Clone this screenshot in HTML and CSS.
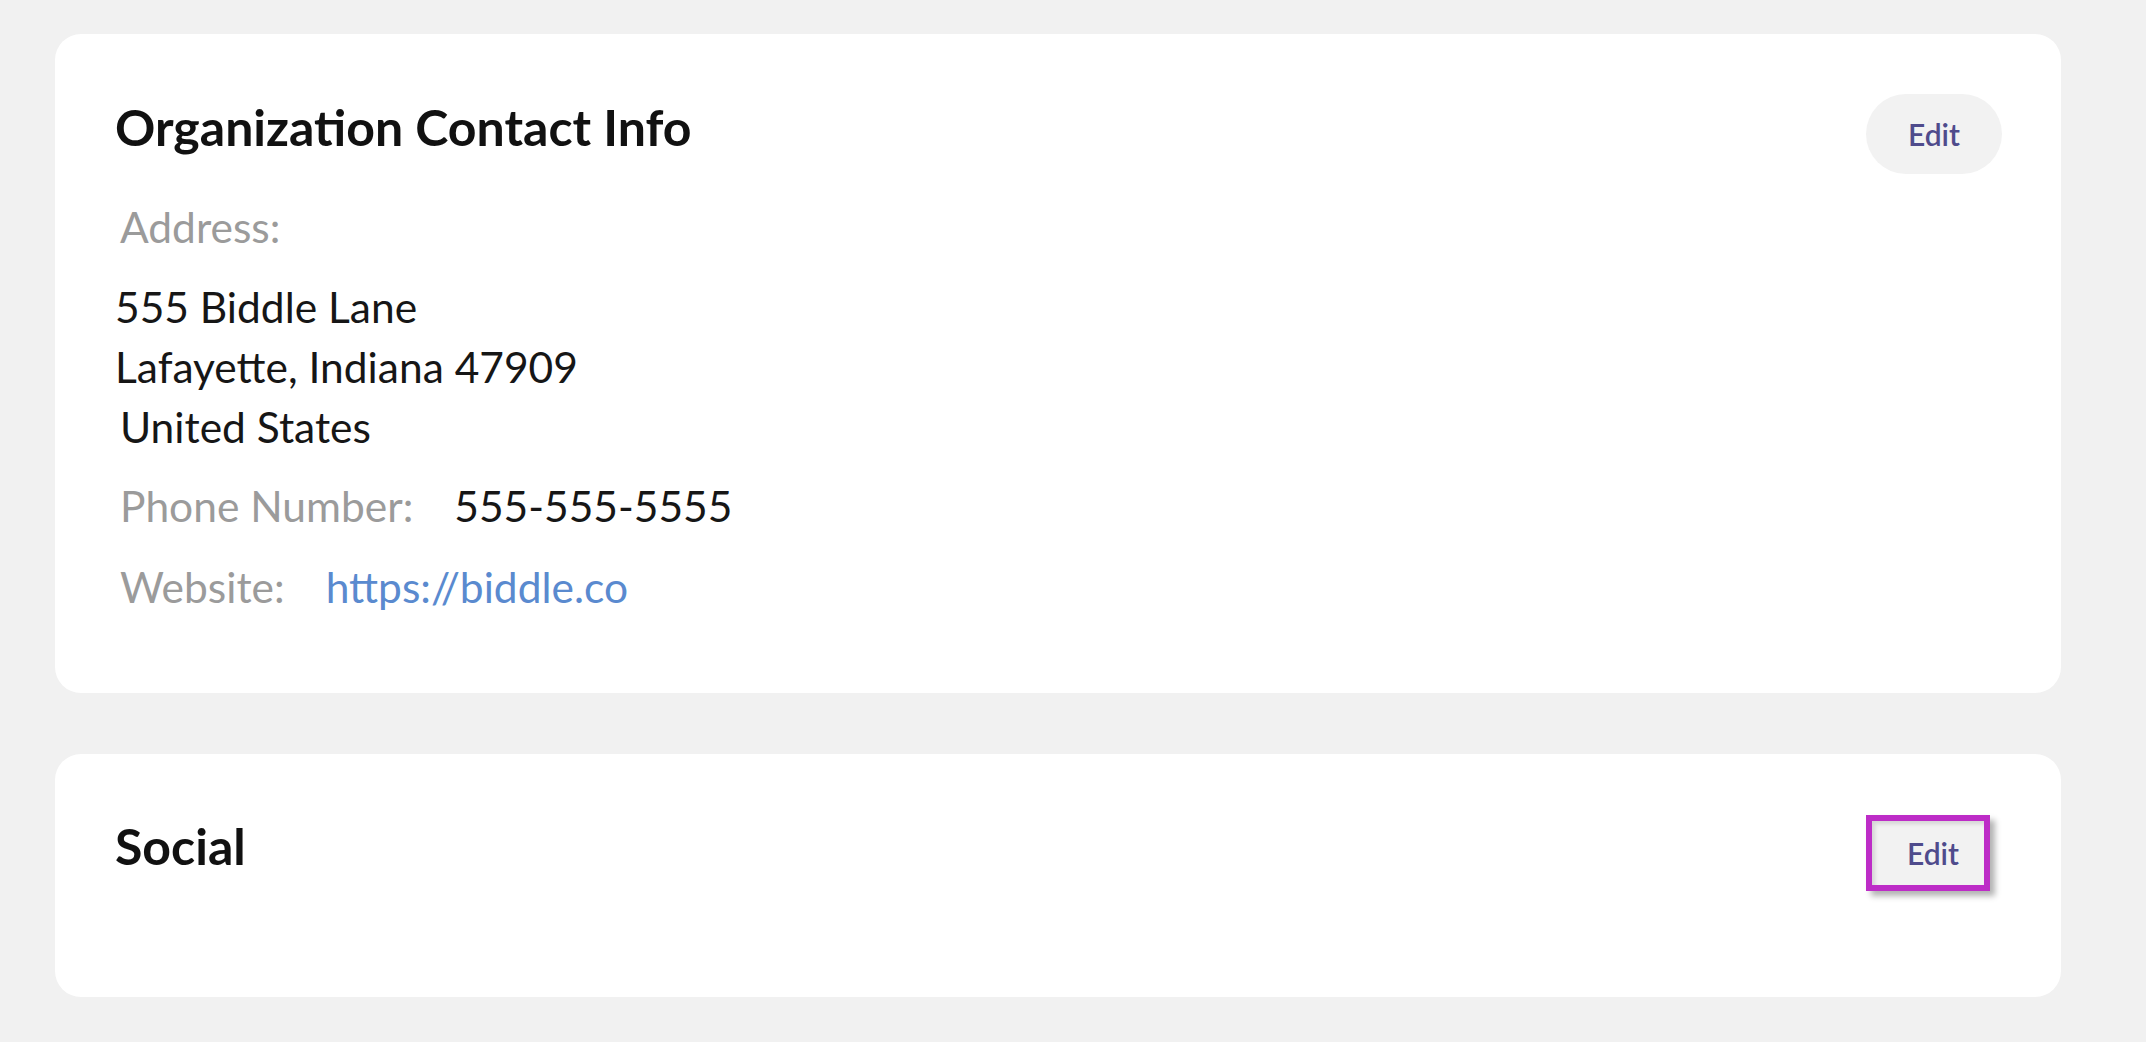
FILE: index.html
```html
<!DOCTYPE html>
<html lang="en">
<head>
    <meta charset="UTF-8">
    <meta name="viewport" content="width=device-width, initial-scale=1.0">
    <title>Organization Settings</title>
    <link rel="stylesheet" href="styles.css">
</head>
<body>

<div class="page">
    <div class="card contact">
        <div class="card-header">
            <h2>Organization Contact Info</h2>
            <button class="edit-btn">Edit</button>
        </div>
        <div class="label row">Address:</div>
        <div class="address">
            <div class="value">555 Biddle Lane</div>
            <div class="value">Lafayette, Indiana 47909</div>
            <div class="value indent">United States</div>
        </div>
        <div class="row field phone">
            <span class="label">Phone Number:</span>
            <span class="value">555-555-5555</span>
        </div>
        <div class="row field website">
            <span class="label">Website:</span>
            <a class="link" href="#">https://biddle.co</a>
        </div>
    </div>

    <div class="card social">
        <div class="card-header">
            <h2>Social</h2>
            <button class="edit-btn focused">Edit</button>
        </div>
    </div>
</div>

</body>
</html>
```

FILE: styles.css
```css
body { margin: 0; background: #f1f1f1; font-family: Lato, "Open Sans", sans-serif; }
.page { padding: 34px 85px 40px 55px; }
.card { background: #fff; border-radius: 26px; padding: 60px 59px 76px 60px; }
.card + .card { margin-top: 61px; }
.card-header { display: flex; justify-content: space-between; align-items: flex-start; }
h2 { margin: 3px 0 0; font-size: 50px; line-height: 60px; font-weight: 700; color: #111; }
.edit-btn { width: 136px; height: 80px; border: none; border-radius: 40px; background: #f2f2f2; color: #4f4b8c; font-family: Lato, sans-serif; font-size: 30px; font-weight: 600; cursor: pointer; }
.edit-btn.focused { width: 124px; height: 76px; margin: 2px 12px 0 0; border-radius: 0; border: 6px solid #bd2cc7; text-align: left; padding: 0 0 0 35px; box-shadow: 5px 5px 6px rgba(0, 0, 0, 0.3), inset 3px 3px 4px rgba(0, 0, 0, 0.12); }
.row, .value, .label { font-size: 42.5px; line-height: 60px; }
.label { color: #9b9b9b; }
.value { color: #161616; }
.card-header + .label { margin: 23px 0 0 5px; }
.address { margin-top: 20px; }
.indent { padding-left: 5px; }
.field { display: flex; gap: 41px; padding-left: 5px; }
.phone { margin-top: 19px; }
.website { margin-top: 21px; }
.link { color: #5a8acf; text-decoration: none; }
.social { padding-top: 59px; padding-bottom: 106px; }
```
